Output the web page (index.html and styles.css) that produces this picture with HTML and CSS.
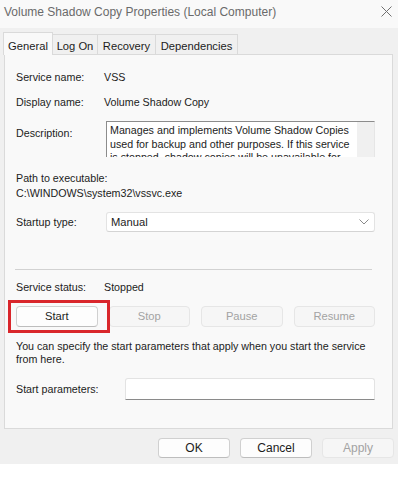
FILE: index.html
```html
<!DOCTYPE html>
<html>
<head>
<meta charset="utf-8">
<link rel="stylesheet" href="styles.css">
</head>
<body>
<div class="window">
  <div class="titlebar">
    <span class="title">Volume Shadow Copy Properties (Local Computer)</span>
    <svg class="close" width="11" height="11" viewBox="0 0 11 11"><path d="M0.5 0.5 L10.5 10.5 M10.5 0.5 L0.5 10.5" stroke="#707070" stroke-width="1" fill="none"/></svg>
  </div>
  <div class="tabs">
    <div class="tab selected">General</div>
    <div class="tab">Log On</div>
    <div class="tab">Recovery</div>
    <div class="tab">Dependencies</div>
  </div>
  <div class="panel">
    <div class="row r1"><span class="label">Service name:</span><span class="value">VSS</span></div>
    <div class="row r2"><span class="label">Display name:</span><span class="value">Volume Shadow Copy</span></div>
    <div class="row desc-row"><span class="label desc-label">Description:</span>
      <div class="descbox">
        <div class="desctext">Manages and implements Volume Shadow Copies<br>used for backup and other purposes. If this service<br>is stopped, shadow copies will be unavailable for<br>backup and the backup may fail.</div>
        <div class="scroll"></div>
      </div>
    </div>
    <div class="path-label">Path to executable:</div>
    <div class="path-value">C:\WINDOWS\system32\vssvc.exe</div>
    <div class="row startup-row"><span class="label">Startup type:</span>
      <div class="combo"><span>Manual</span>
        <svg width="10" height="6" viewBox="0 0 10 6"><path d="M0.5 0.5 L5 5 L9.5 0.5" stroke="#8a8a8a" stroke-width="1" fill="none"/></svg>
      </div>
    </div>
    <div class="sep"></div>
    <div class="row status-row"><span class="label">Service status:</span><span class="value">Stopped</span></div>
    <div class="svc-buttons">
      <div class="btn">Start</div>
      <div class="btn disabled">Stop</div>
      <div class="btn disabled">Pause</div>
      <div class="btn disabled">Resume</div>
      <div class="highlight"></div>
    </div>
    <div class="hint">You can specify the start parameters that apply when you start the service<br>from here.</div>
    <div class="row params-row"><span class="label params-label">Start parameters:</span><div class="input"></div></div>
  </div>
  <div class="footer">
    <div class="btn fbtn">OK</div>
    <div class="btn fbtn">Cancel</div>
    <div class="btn fbtn disabled">Apply</div>
  </div>
</div>
</body>
</html>
```
FILE: styles.css
```css
* { box-sizing: border-box; }
html, body { margin: 0; padding: 0; background: #ffffff; }
body { font-family: "Liberation Sans", Arial, sans-serif; font-size: 10.7px; color: #1c1c1c; }

.window { width: 398px; height: 464px; background: #f0f0f0; display: flex; flex-direction: column; }

.titlebar { height: 28px; background: #f9f9f9; display: flex; justify-content: space-between; align-items: flex-start; padding: 4px 6px 0 4px; }
.title { font-size: 12px; line-height: 16px; color: #6a6a6a; }
.close { margin-top: 2px; margin-right: 0; }

.tabs { display: flex; align-items: flex-end; height: 26px; padding-left: 3px; }
.tab { height: 20px; line-height: 19px; padding: 2px 0 0; text-align: center; white-space: nowrap; border: 1px solid #dadada; border-bottom: none; margin-left: -1px; background: #f0f0f0; color: #1c1c1c; font-size: 11.2px; }
.tab.selected { height: 23px; padding-top: 4px; background: #f9f9f9; margin-left: 0; margin-bottom: -1px; position: relative; z-index: 1; width: 50px; }
.tab:nth-child(2) { width: 46px; }
.tab:nth-child(3) { width: 59px; }
.tab:nth-child(4) { width: 83px; }

.panel { height: 375px; margin: 0 5px 0 4px; background: #f9f9f9; border: 1px solid #dadada; padding: 15px 0 0 11px; display: flex; flex-direction: column; }

.row { display: flex; align-items: center; line-height: 15px; }
.label { width: 88px; flex: none; }
.r2 { margin-top: 10px; }

.desc-row { margin-top: 11px; align-items: flex-start; }
.desc-label { padding-top: 5px; }
.descbox { margin-left: 2px; width: 269px; height: 36px; display: flex; background: #fff; border-top: 1px solid #8c8c8c; border-left: 1px solid #8c8c8c; border-right: 1px solid #e6e6e6; overflow: hidden; }
.desctext { flex: 1; padding: 2px 0 0 3px; line-height: 13.5px; white-space: nowrap; overflow: hidden; }
.scroll { width: 17px; flex: none; background: #f0f0f0; }

.path-label { margin-top: 14px; line-height: 15px; }
.path-value { line-height: 15px; }

.startup-row { margin-top: 11px; }
.combo { margin-left: 2px; width: 269px; height: 20px; background: #fff; border: 1px solid #e3e3e3; border-bottom-color: #d4d4d4; border-radius: 3px; display: flex; align-items: center; justify-content: space-between; padding: 0 5px 0 4px; font-size: 11.2px; }

.sep { margin-top: 37px; height: 1px; background: #d2d2d2; margin-right: 20px; margin-left: -1px; }

.status-row { margin-top: 10px; }

.svc-buttons { position: relative; margin-top: 11px; display: grid; grid-template-columns: repeat(4, 1fr); gap: 11px; width: 359px; }
.btn { height: 21px; line-height: 19px; text-align: center; background: #fdfdfd; border: 1px solid #d0d0d0; border-bottom-color: #bdbdbd; border-radius: 4px; font-size: 11.2px; color: #1c1c1c; }
.btn.disabled { background: #f6f6f6; border-color: #e6e6e6; color: #a3a3a3; }
.highlight { position: absolute; left: -8px; top: -6px; width: 102px; height: 33px; border: 3px solid #d9262b; }

.hint { margin-top: 13px; line-height: 13px; }

.params-row { margin-top: 12px; }
.params-label { width: 109px; }
.input { width: 250px; height: 22px; background: #fff; border: 1px solid #e3e3e3; border-bottom: 1px solid #8a8a8a; border-radius: 3px 3px 0 0; }

.footer { display: flex; justify-content: flex-end; gap: 10px; padding: 9px 4px 0 0; }
.fbtn { width: 72px; height: 20px; line-height: 18px; font-size: 12px; }
```
